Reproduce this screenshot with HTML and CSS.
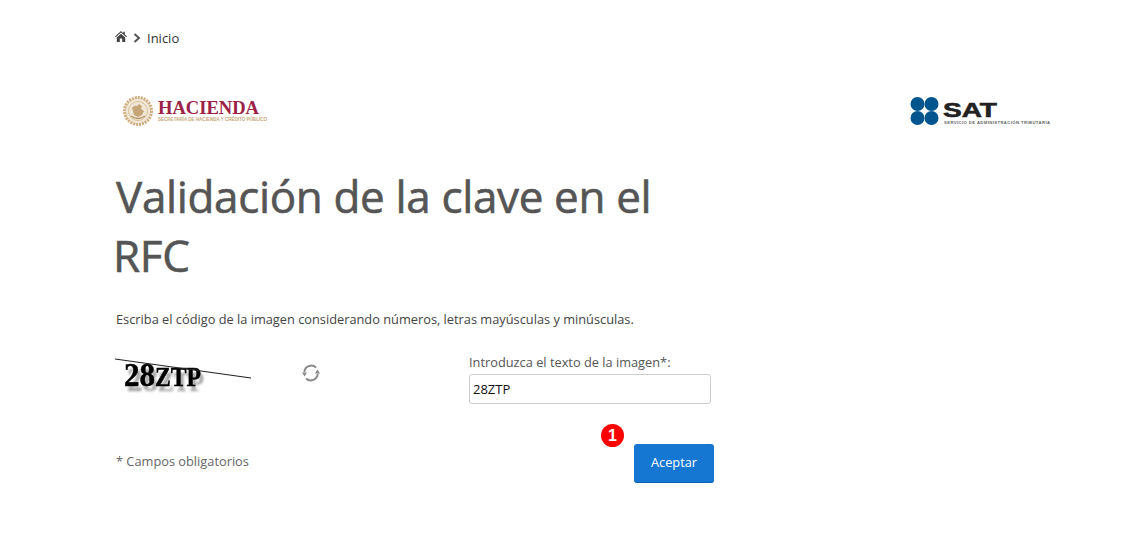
FILE: index.html
```html
<!doctype html>
<html lang="es">
<head>
 <meta charset="utf-8">
 <title>Validación de la clave en el RFC</title>
 <link rel="stylesheet" href="styles.css">
</head>
<body>
<div class="page">
 <div class="crumbs">
  <svg class="home" viewBox="0 0 12 11" width="12" height="11"><path d="M6 0 0 5.400l.7.8L6 1.600l5.300 4.600.7-.8L9.800 3.500V.8H8.300v1.400z"/><path d="M6 2.800 1.800 6.400V11h3V7.600h2.400V11h3V6.400z"/></svg>
  <svg class="chev" viewBox="0 0 8 10" width="8" height="10"><path d="M1.500 1 6 5 1.500 9" fill="none" stroke="#555" stroke-width="2"/></svg>
  <span class="crumb">Inicio</span>
 </div>

 <div class="logos">
  <svg class="logo-hacienda" viewBox="0 0 146 32" width="146" height="32">
   <circle cx="15" cy="16" r="13.500" fill="#f1e7d6" stroke="#cfae80" stroke-width="3" stroke-dasharray="2 1"/>
   <circle cx="15" cy="16" r="9.500" fill="none" stroke="#d8c19c" stroke-width="1"/>
   <path d="M9 13q2-3 5-2l2-2 3 2-1 3 3 2-2 4-4 2-4-2-1-4z" fill="#c4a678"/>
   <path d="M8 21q7 5 14 0" fill="none" stroke="#b89a68" stroke-width="1.500"/>
   <text x="35" y="18.500" class="hacienda-name" textLength="101" lengthAdjust="spacingAndGlyphs">HACIENDA</text>
   <text x="35" y="26" class="hacienda-sub" textLength="109" lengthAdjust="spacingAndGlyphs">SECRETARÍA DE HACIENDA Y CRÉDITO PÚBLICO</text>
  </svg>
  <svg class="logo-sat" viewBox="0 0 142 30" width="142" height="30">
   <circle cx="7.500" cy="8" r="7" fill="#00558f"/>
   <circle cx="21.500" cy="8" r="7" fill="#00558f"/>
   <circle cx="7.500" cy="22" r="7" fill="#00558f"/>
   <circle cx="21.500" cy="22" r="7" fill="#00558f"/>
   <text x="33" y="21" class="sat-name" textLength="54" lengthAdjust="spacingAndGlyphs">SAT</text>
   <text x="34" y="27.500" class="sat-sub" textLength="106" lengthAdjust="spacing">SERVICIO DE ADMINISTRACIÓN TRIBUTARIA</text>
  </svg>
 </div>

 <h1 class="title">Validación de la clave en el RFC</h1>

 <p class="intro">Escriba el código de la imagen considerando números, letras mayúsculas y minúsculas.</p>

 <div class="captcha-row">
  <svg class="captcha" viewBox="0 0 138 44" width="138" height="44">
   <g class="captcha-code">
    <text x="9" y="33" class="big" textLength="31" lengthAdjust="spacingAndGlyphs">28</text>
    <text x="40" y="33" class="small" textLength="46" lengthAdjust="spacingAndGlyphs">ZTP</text>
   </g>
   <path d="M0 6 136 25" stroke="#222" stroke-width="1.200"/>
  </svg>
  <svg class="refresh" viewBox="0 0 20 20" width="20" height="20">
   <path d="M15 4.500A7 7 0 0 0 3.300 9" fill="none" stroke="#888" stroke-width="2"/>
   <path d="M1 9.500h5l-2.500 4z" fill="#888"/>
   <path d="M5 15.500A7 7 0 0 0 16.700 11" fill="none" stroke="#888" stroke-width="2"/>
   <path d="M14 10.500h5l-2.500-4z" fill="#888"/>
  </svg>
  <div class="field">
   <label class="field-label" for="code">Introduzca el texto de la imagen*:</label>
   <input class="field-input" id="code" value="28ZTP">
  </div>
 </div>

 <div class="actions">
  <span class="required">* Campos obligatorios</span>
  <div class="submit">
   <span class="badge">1</span>
   <button class="btn">Aceptar</button>
  </div>
 </div>
</div>
</body>
</html>
```

FILE: styles.css
```css
html, body {
  margin: 0;
  padding: 0;
  background: #fff;
}
body {
  font-family: "Open Sans", sans-serif;
  color: #555;
}
.page {
  width: 936px;
  margin-left: 116px;
  padding-top: 31px;
}
.crumbs {
  display: flex;
  align-items: center;
  height: 14px;
  margin-left: -1px;
  font-size: 13px;
}
.home {
  fill: #444;
  margin-right: 6px;
  margin-top: -3px;
}
.chev {
  margin-right: 6px;
  margin-top: -1px;
}
.crumb {
  color: #333;
}
.logos {
  display: flex;
  justify-content: space-between;
  margin-top: 50px;
  padding-left: 7px;
}
.logo-sat {
  margin-top: 1px;
}
.hacienda-name {
  font-family: "Liberation Serif", serif;
  font-size: 18px;
  font-weight: bold;
  fill: #9b2247;
}
.hacienda-sub {
  font-family: "Liberation Sans", sans-serif;
  font-size: 4.500px;
  font-weight: bold;
  fill: #c4a678;
}
.sat-name {
  font-family: "Liberation Sans", sans-serif;
  font-size: 21px;
  font-weight: bold;
  fill: #222;
  stroke: #222;
  stroke-width: 0.6px;
}
.sat-sub {
  font-family: "Liberation Sans", sans-serif;
  font-size: 4.200px;
  font-weight: bold;
  fill: #666;
}
.title {
  width: 600px;
  margin: 40px 0 0 -3px;
  font-size: 44px;
  font-weight: 400;
  letter-spacing: -0.35px;
  line-height: 59px;
  text-indent: 3px;
  color: #555;
  -webkit-text-stroke: 0.6px #555;
}
.intro {
  margin: 25px 0 0;
  font-size: 12.800px;
  line-height: 18px;
  color: #444;
}
.captcha-row {
  display: flex;
  margin-top: 25px;
}
.captcha {
  display: block;
  margin-left: -1px;
}
.captcha-code {
  fill: #000;
  stroke: #000;
  stroke-width: 0.5px;
  filter: drop-shadow(3px 5px 1px #aaa);
}
.captcha text {
  font-family: "Liberation Serif", serif;
  font-weight: bold;
}
.big {
  font-size: 33px;
}
.small {
  font-size: 27px;
}
.refresh {
  margin: 10px 0 0 48px;
}
.field {
  display: flex;
  flex-direction: column;
  margin-left: 148px;
}
.field-label {
  font-size: 12.800px;
  line-height: 18px;
  color: #555;
}
.field-input {
  box-sizing: border-box;
  width: 242px;
  height: 30px;
  margin-top: 3px;
  padding: 0 3px;
  border: 1px solid #ccc;
  border-radius: 3px;
  font: 13px "Open Sans", sans-serif;
  color: #111;
}
.actions {
  display: flex;
  align-items: flex-start;
  justify-content: space-between;
  width: 598px;
  margin-top: 40px;
}
.required {
  margin-top: 8px;
  font-size: 12.800px;
  line-height: 18px;
  color: #666;
}
.submit {
  position: relative;
}
.btn {
  display: block;
  width: 80px;
  height: 39px;
  padding: 0 0 2px;
  border: 0;
  border-bottom: 1px solid #0f5fae;
  border-radius: 3px;
  background: #1577d2;
  color: #fff;
  font: 12.800px "Open Sans", sans-serif;
}
.badge {
  position: absolute;
  left: -33px;
  top: -20px;
  width: 23px;
  height: 23px;
  border-radius: 50%;
  background: #f00;
  color: #fff;
  font: bold 16px/23px "Liberation Sans", sans-serif;
  text-align: center;
}
```
